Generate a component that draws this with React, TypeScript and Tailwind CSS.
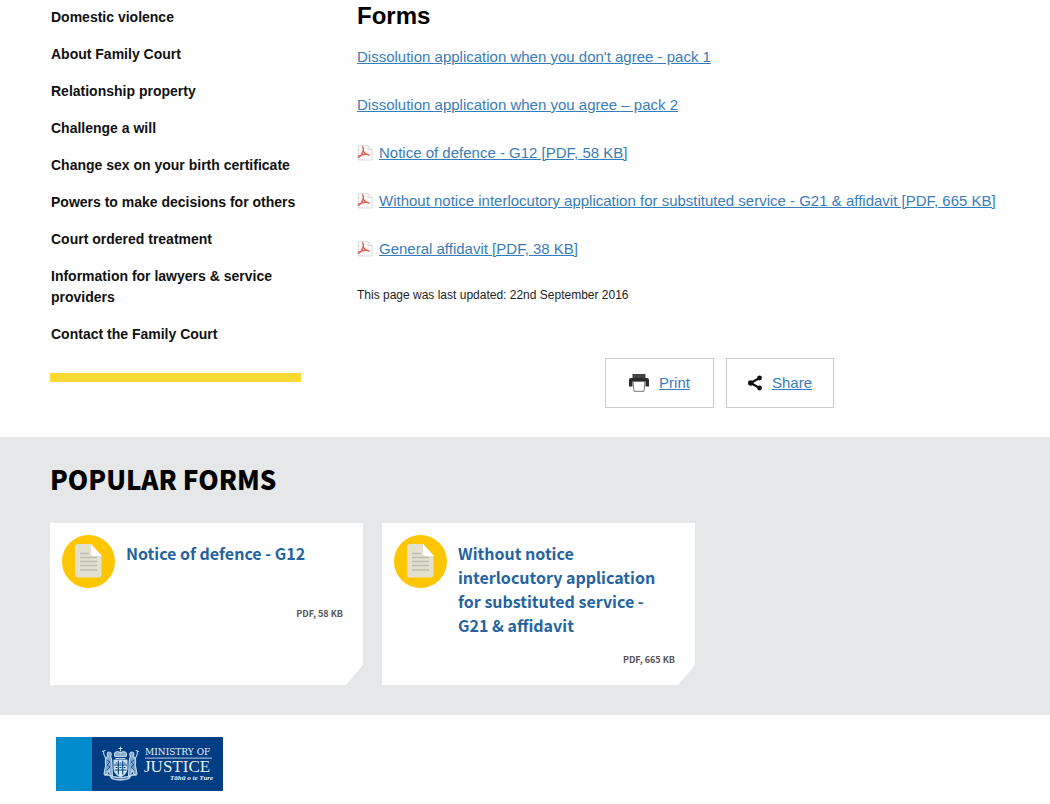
import React from "react";

type FormLink = {
  label: string;
  pdf: boolean;
};

type PopularForm = {
  title: string;
  meta: string;
};

const sideLinks: string[] = [
  "Domestic violence",
  "About Family Court",
  "Relationship property",
  "Challenge a will",
  "Change sex on your birth certificate",
  "Powers to make decisions for others",
  "Court ordered treatment",
  "Information for lawyers & service providers",
  "Contact the Family Court",
];

const formLinks: FormLink[] = [
  { label: "Dissolution application when you don't agree - pack 1", pdf: false },
  { label: "Dissolution application when you agree – pack 2", pdf: false },
  { label: "Notice of defence - G12 [PDF, 58 KB]", pdf: true },
  {
    label:
      "Without notice interlocutory application for substituted service - G21 & affidavit [PDF, 665 KB]",
    pdf: true,
  },
  { label: "General affidavit [PDF, 38 KB]", pdf: true },
];

const popularForms: PopularForm[] = [
  { title: "Notice of defence - G12", meta: "PDF, 58 KB" },
  {
    title: "Without notice interlocutory application for substituted service - G21 & affidavit",
    meta: "PDF, 665 KB",
  },
];

const PdfIcon = () => (
  <svg width="16" height="16" viewBox="0 0 16 16" fill="none" className="shrink-0" aria-hidden="true">
    <path d="M1.500 .5h9.500l4 4v10.500H1.500z" fill="#fbfbfb" stroke="#d8dcdb" />
    <path d="M11 .5v4h4" stroke="#d8dcdb" />
    <path
      d="M5 2c1.800 0 1.500 2.500 1 4.200C5.200 8.800 3 12 .5 12.300M5.700 4.500c.8 2.600 2.600 5 7 5.700M1.500 11c3-1.300 6-2 10-1.500"
      stroke="#dc6562"
      strokeWidth="1.500"
    />
  </svg>
);

const PrintIcon = () => (
  <svg width="20" height="18" viewBox="0 0 20 18" aria-hidden="true">
    <path d="M3.500 0h13v4h-13z" fill="#444" />
    <path d="M2 4h16a2 2 0 0 1 2 2v6.500h-3.500V7.500h-13v5H0V6a2 2 0 0 1 2-2z" fill="#2b2b2b" />
    <path d="M4 7.500h12l-1 9.800H5z" fill="#fff" stroke="#777" strokeWidth="1" />
  </svg>
);

const ShareIcon = () => (
  <svg width="14" height="16" viewBox="0 0 14 16" aria-hidden="true">
    <path d="M11.500 3 2.700 8l8.800 5" fill="none" stroke="#111" strokeWidth="2.200" />
    <circle cx="11.500" cy="3" r="2.400" fill="#111" />
    <circle cx="2.700" cy="8" r="2.700" fill="#111" />
    <circle cx="11.500" cy="13" r="2.400" fill="#111" />
  </svg>
);

const DocumentBadge = () => (
  <svg width="53" height="53" viewBox="0 0 53 53" className="shrink-0" aria-hidden="true">
    <circle cx="26.500" cy="26.500" r="26.500" fill="#fec601" />
    <path d="M16 9h13l10.500 11v19.500a3 3 0 0 1-3 3H16a3 3 0 0 1-3-3V12a3 3 0 0 1 3-3z" fill="#e2e1cf" />
    <path d="M29 9l10.500 12H32a3 3 0 0 1-3-3z" fill="#fff" />
    <path
      d="M18 18.500h9M18 22.500h17M18 26.500h17M18 30.500h17M18 35h17"
      stroke="#bcbdae"
      strokeWidth="1.300"
    />
  </svg>
);

const MinistryLogo = () => (
  <svg width="167" height="54" viewBox="0 0 167 54" role="img" aria-label="Ministry of Justice">
    <path d="M0 0h167v54H0z" fill="#003d82" />
    <path d="M0 0h36v54H0z" fill="#008bcd" />
    {/* coat of arms: crown, shield, two supporters and scroll */}
    <g stroke="#c3d7ec" fill="none" strokeWidth="1.100" strokeLinecap="round" strokeLinejoin="round">
      <path d="M64.500 10v4M63 11.500h3" />
      <path d="M59 19.500c-2-5 3-6 5.500-3.500 2.500-2.500 7.500-1.500 5.500 3.500zM60 21.500h9" fill="#8badd0" />
      <path d="M58 23h13v9c0 4-3 6-6.500 8-3.500-2-6.500-4-6.500-8z" fill="#dbe8f5" />
      <path d="M62.300 24v13M66.700 24v13M58.500 28h12M59 33h11" stroke="#003d82" />
      <path d="M60 26h1M64 26h1M68 26h1M60 30.500h1M64 30.500h1M68 30.500h1" stroke="#003d82" />
      <path
        d="M53 15c-2 0-2.500 3-.5 4l-2.500 2c-1.500 3 0 6-.5 8l-1.500 8 3 1 2-6 1.500 7h2l-.500-9c0-4 0-8-1.500-11 1.500-1.500.5-4-1.500-4z"
        fill="#7fa4cb"
      />
      <path
        d="M76 15c2 0 2.500 3 .5 4l2.500 2c1.500 3 0 6 .5 8l1.500 8-3 1-2-6-1.500 7h-2l.500-9c0-4 0-8 1.500-11-1.500-1.500-.5-4 1.500-4z"
        fill="#7fa4cb"
      />
      <path d="M51 23l3 2-3 3 3 2-3 3M78 23l-3 2 3 3-3 2 3 3" stroke="#003d82" strokeWidth="0.800" />
      <path d="M46.500 14.500l2.500-1M47.500 14c-.5 3 1 5 2.500 8M82.500 14.500l-2.500-1M81.500 14c.5 3-1 5-2.500 8" />
      <path d="M49 38c4-1 6 2 10 2 4 1 7 1 11 0 4 0 6-3 10-2M55 40c1 3 5 2 9 3 4-1 9 0 10-3" strokeWidth="1.500" />
    </g>
    <g fill="#e8f0f8" fontFamily="'Liberation Serif', serif">
      <text x="89" y="18" fontFamily="'DejaVu Serif', serif" fontSize="9">MINISTRY OF</text>
      <path d="M89 20.500h67v1.200H89z" fill="#8fb0d3" />
      <text x="88" y="35" fontSize="17">JUSTICE</text>
      <text x="114" y="43" fontSize="7" fontStyle="italic" fontWeight="bold">Tāhū o te Ture</text>
    </g>
  </svg>
);

const SideNav = () => (
  <nav className="w-[251px] shrink-0">
    <ul className="flex flex-col gap-4 border-b-[9px] border-[#fada32] pt-[7px] pb-[28px]">
      {sideLinks.map((label) => (
        <li key={label}>
          <a href="#" className="block pl-px text-sm leading-[21px] font-bold text-[#111]">
            {label}
          </a>
        </li>
      ))}
    </ul>
  </nav>
);

const FormsContent = () => (
  <main className="flex-1">
    <h1 className="pt-px text-2xl leading-[30px] font-bold text-black">Forms</h1>
    <ul className="mt-[14px] flex flex-col gap-6">
      {formLinks.map((link) => (
        <li key={link.label} className="flex items-center gap-[6px]">
          {link.pdf && <PdfIcon />}
          <a href="#" className="text-[15px] leading-6 text-[#3a7cb9] underline">
            {link.label}
          </a>
        </li>
      ))}
    </ul>
    <p className="mt-6 text-xs leading-5 text-[#222]">This page was last updated: 22nd September 2016</p>
    <div className="mt-[53px] ml-[248px] flex gap-3">
      <a
        href="#"
        className="flex h-[50px] w-[109px] items-center justify-center gap-[10px] border border-[#ccc] text-[15px] text-[#3a7cb9]"
      >
        <PrintIcon />
        <span className="underline">Print</span>
      </a>
      <a
        href="#"
        className="flex h-[50px] w-[108px] items-center justify-center gap-[10px] border border-[#ccc] text-[15px] text-[#3a7cb9]"
      >
        <ShareIcon />
        <span className="underline">Share</span>
      </a>
    </div>
  </main>
);

const PopularForms = () => (
  <section className="bg-[#e5e7e8] pt-[23px] pr-[23px] pb-[30px] pl-[50px] font-['Noto_Sans_CJK_SC',sans-serif]">
    <h2 className="text-[26px] leading-[38px] font-black text-black">POPULAR FORMS</h2>
    <div className="mt-[25px] grid grid-cols-3 gap-[19px]">
      {popularForms.map((form) => (
        <a
          key={form.title}
          href="#"
          className="flex min-h-[162px] flex-col bg-white pt-[12px] pr-5 pl-3 [clip-path:polygon(0_0,100%_0,100%_calc(100%-20px),calc(100%-17px)_100%,0_100%)]"
        >
          <div className="flex min-h-14 items-start gap-[11px]">
            <DocumentBadge />
            <h3 className="pt-[6px] text-base leading-6 font-bold text-[#24639f]">{form.title}</h3>
          </div>
          <p className="mt-4 text-right text-[9px] leading-[14px] font-bold text-[#555]">{form.meta}</p>
        </a>
      ))}
    </div>
  </section>
);

const App = () => {
  return (
    <div className="min-h-screen bg-white font-['Liberation_Sans',Arial,sans-serif]">
      <div className="flex gap-14 pr-5 pb-[29px] pl-[50px]">
        <SideNav />
        <FormsContent />
      </div>
      <PopularForms />
      <footer className="px-14 pt-[22px] pb-[13px]">
        <a href="#" className="inline-block">
          <MinistryLogo />
        </a>
      </footer>
    </div>
  );
};

export default App;
